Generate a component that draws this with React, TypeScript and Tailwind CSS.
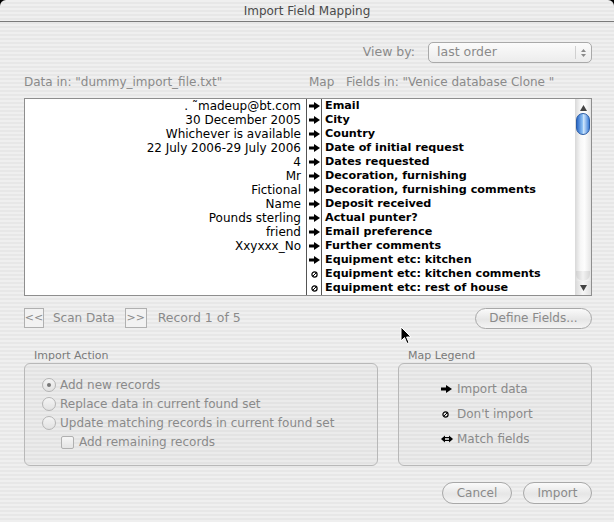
import React from "react";

const rows: [string, string, "a" | "x"][] = [
  [". \u02DCmadeup@bt.com", "Email", "a"],
  ["30 December 2005", "City", "a"],
  ["Whichever is available", "Country", "a"],
  ["22 July 2006-29 July 2006", "Date of initial request", "a"],
  ["4", "Dates requested", "a"],
  ["Mr", "Decoration, furnishing", "a"],
  ["Fictional", "Decoration, furnishing comments", "a"],
  ["Name", "Deposit received", "a"],
  ["Pounds sterling", "Actual punter?", "a"],
  ["friend", "Email preference", "a"],
  ["Xxyxxx_No", "Further comments", "a"],
  ["", "Equipment etc: kitchen", "a"],
  ["", "Equipment etc: kitchen comments", "x"],
  ["", "Equipment etc: rest of house", "x"],
];

function Arrow() {
  return (
    <svg width="11" height="8" viewBox="0 0 11 8">
      <rect x="0" y="2.5" width="6" height="3" fill="#000" />
      <polygon points="5,0 11,4 5,8" fill="#000" />
    </svg>
  );
}

function NoImport() {
  return (
    <svg width="7" height="7" viewBox="0 0 7 7">
      <circle cx="3.5" cy="3.5" r="2.6" fill="none" stroke="#000" strokeWidth="1.2" />
      <line x1="1.8" y1="5.2" x2="5.2" y2="1.8" stroke="#000" strokeWidth="1" />
    </svg>
  );
}

function Match() {
  return (
    <svg width="12" height="8" viewBox="0 0 12 8">
      <polygon points="0,4 4,0.5 4,7.5" fill="#000" />
      <polygon points="12,4 8,0.5 8,7.5" fill="#000" />
      <rect x="4" y="2" width="4" height="1.2" fill="#000" />
      <rect x="4" y="4.8" width="4" height="1.2" fill="#000" />
    </svg>
  );
}

function Radio({ on }: { on?: boolean }) {
  return (
    <span className="w-[14px] h-[14px] rounded-full border border-[#b4b4b4] bg-[linear-gradient(180deg,#f4f4f4,#e2e2e2)] flex items-center justify-center shrink-0">
      {on && <span className="w-[4px] h-[4px] rounded-full bg-[#777]" />}
    </span>
  );
}

const stripes =
  "bg-[repeating-linear-gradient(180deg,#efefef_0px,#efefef_2px,#e7e7e7_2px,#e7e7e7_4px)]";

export default function App() {
  return (
    <div className="w-[614px] h-[522px] bg-black overflow-hidden font-['DejaVu_Sans',sans-serif]">
      <div className={`relative h-full rounded-t-[6px] ${stripes} flex flex-col`}>
        {/* title bar */}
        <div className="h-[22px] border-b border-[#7a7a7a] flex items-center justify-center text-[12px] text-[#4a4a4a] shrink-0">
          Import Field Mapping
        </div>

        <div className="pl-[24px] pr-[22px] flex flex-col">
          {/* View by */}
          <div className="mt-[20px] h-[21px] flex items-center justify-end gap-[13px]">
            <span className="text-[12.5px] text-[#8a8a8a]">View by:</span>
            <div className="w-[164px] h-[21px] rounded-[5px] border border-[#a9a9a9] bg-[linear-gradient(180deg,#fbfbfb,#ececec)] flex items-center">
              <span className="flex-1 pl-[8px] text-[12.5px] text-[#8a8a8a]">last order</span>
              <span className="w-[16px] h-[13px] border-l border-[#d0d0d0] flex flex-col items-center justify-center gap-[2px]">
                <svg width="5" height="3" viewBox="0 0 5 3"><polygon points="2.5,0 5,3 0,3" fill="#8a8a8a" /></svg>
                <svg width="5" height="3" viewBox="0 0 5 3"><polygon points="0,0 5,0 2.5,3" fill="#8a8a8a" /></svg>
              </span>
            </div>
          </div>

          {/* headers */}
          <div className="mt-[12px] h-[14px] flex items-center text-[12px] text-[#8a8a8a] leading-[14px]">
            <span className="w-[285px]">Data in: "dummy_import_file.txt"</span>
            <span className="w-[37px]">Map</span>
            <span>Fields in: "Venice database Clone "</span>
          </div>

          {/* list */}
          <div className="mt-[9px] w-[568px] h-[198px] border border-[#8e8e8e] bg-white flex">
            <div className="w-[282px] flex flex-col border-r border-[#555]">
              {rows.map((r, i) => (
                <div key={i} className="h-[14px] leading-[14px] text-[12px] text-black text-right pr-[5px] whitespace-nowrap">
                  {r[0]}
                </div>
              ))}
            </div>
            <div className="w-[15px] flex flex-col border-r border-[#555]">
              {rows.map((r, i) => (
                <div key={i} className="h-[14px] flex items-center justify-center pl-[1px]">
                  {r[2] === "a" ? <Arrow /> : <NoImport />}
                </div>
              ))}
            </div>
            <div className="flex-1 flex flex-col pl-[3px]">
              {rows.map((r, i) => (
                <div key={i} className="h-[14px] leading-[14px] text-[11.2px] font-bold text-black whitespace-nowrap">
                  {r[1]}
                </div>
              ))}
            </div>
            {/* scrollbar */}
            <div className="w-[16px] flex flex-col bg-[linear-gradient(90deg,#d8d8d8,#f7f7f7_35%,#fdfdfd_60%,#e4e4e4)]">
              <div className="h-[14px] flex items-center justify-center pt-[3px]">
                <svg width="7" height="6" viewBox="0 0 7 6"><polygon points="3.5,0 7,6 0,6" fill="#444" /></svg>
              </div>
              <div className="mx-auto w-[14px] h-[22px] rounded-full border border-[#2a5ca6] bg-[linear-gradient(90deg,#2c68c6,#8cc0f4_45%,#cfe6fc_55%,#3d7ed8)]" />
              <div className="flex-1" />
              <div className="mx-auto w-[14px] h-[10px] rounded-b-full bg-[linear-gradient(90deg,#d0d0d0,#f2f2f2_50%,#d6d6d6)]" />
              <div className="h-[14px] flex items-center justify-center bg-[linear-gradient(90deg,#d8d8d8,#f7f7f7_50%,#e0e0e0)]">
                <svg width="7" height="6" viewBox="0 0 7 6"><polygon points="0,0 7,0 3.5,6" fill="#444" /></svg>
              </div>
            </div>
          </div>

          {/* scan row */}
          <div className="mt-[11px] h-[22px] flex items-center text-[12px] text-[#8a8a8a]">
            <span className="w-[20px] h-[20px] border border-[#b0b0b0] bg-[#f2f2f2] flex items-center justify-center text-[11px]">&lt;&lt;</span>
            <span className="ml-[9px]">Scan Data</span>
            <span className="ml-[10px] w-[22px] h-[20px] border border-[#b0b0b0] bg-[#f2f2f2] flex items-center justify-center text-[11px]">&gt;&gt;</span>
            <span className="ml-[11px] text-[12.5px]">Record 1 of 5</span>
            <span className="ml-auto w-[117px] h-[21px] rounded-full border border-[#a8a8a8] bg-[linear-gradient(180deg,#fafafa,#e6e6e6_55%,#f4f4f4)] flex items-center justify-center">
              Define Fields...
            </span>
          </div>

          {/* groups */}
          <div className="mt-[20px] flex gap-[20px]">
            <div className="w-[354px] flex flex-col">
              <span className="pl-[10px] h-[14px] leading-[14px] text-[11px] text-[#7a7a7a]">Import Action</span>
              <div className="h-[103px] rounded-[6px] border border-[#b8b8b8] bg-black/[0.015] pl-[17px] pt-[14px] flex flex-col gap-[5px] text-[12px] text-[#8a8a8a]">
                <div className="h-[14px] flex items-center gap-[4px]"><Radio on /> Add new records</div>
                <div className="h-[14px] flex items-center gap-[4px]"><Radio /> Replace data in current found set</div>
                <div className="h-[14px] flex items-center gap-[4px]"><Radio /> Update matching records in current found set</div>
                <div className="h-[14px] flex items-center gap-[5px] pl-[19px]">
                  <span className="w-[13px] h-[13px] rounded-[2px] border border-[#b0b0b0] bg-[linear-gradient(180deg,#f6f6f6,#e4e4e4)]" />
                  Add remaining records
                </div>
              </div>
            </div>
            <div className="w-[194px] flex flex-col">
              <span className="pl-[10px] h-[14px] leading-[14px] text-[11px] text-[#7a7a7a]">Map Legend</span>
              <div className="h-[103px] rounded-[6px] border border-[#b8b8b8] bg-black/[0.015] pt-[18px] flex flex-col gap-[11px] text-[12px] text-[#8a8a8a]">
                <div className="h-[14px] flex items-center">
                  <span className="w-[58px] flex justify-end pr-[5px]"><Arrow /></span>Import data
                </div>
                <div className="h-[14px] flex items-center">
                  <span className="w-[58px] flex justify-end pr-[8px]"><NoImport /></span>Don't import
                </div>
                <div className="h-[14px] flex items-center">
                  <span className="w-[58px] flex justify-end pr-[4px]"><Match /></span>Match fields
                </div>
              </div>
            </div>
          </div>

          {/* bottom buttons */}
          <div className="mt-[16px] flex justify-end gap-[11px] text-[12px] text-[#8a8a8a]">
            <span className="w-[70px] h-[22px] rounded-full border border-[#a8a8a8] bg-[linear-gradient(180deg,#fafafa,#e6e6e6_55%,#f4f4f4)] flex items-center justify-center">Cancel</span>
            <span className="w-[69px] h-[22px] rounded-full border border-[#a8a8a8] bg-[linear-gradient(180deg,#fafafa,#e6e6e6_55%,#f4f4f4)] flex items-center justify-center">Import</span>
          </div>
        </div>

        {/* mouse cursor */}
        <svg className="absolute left-[400px] top-[326px]" width="12" height="19" viewBox="0 0 12 19">
          <polygon points="1,1 1,15 4.5,11.5 7,17.5 9,16.6 6.6,11 11,11" fill="#000" stroke="#fff" strokeWidth="1" />
        </svg>
      </div>
    </div>
  );
}
